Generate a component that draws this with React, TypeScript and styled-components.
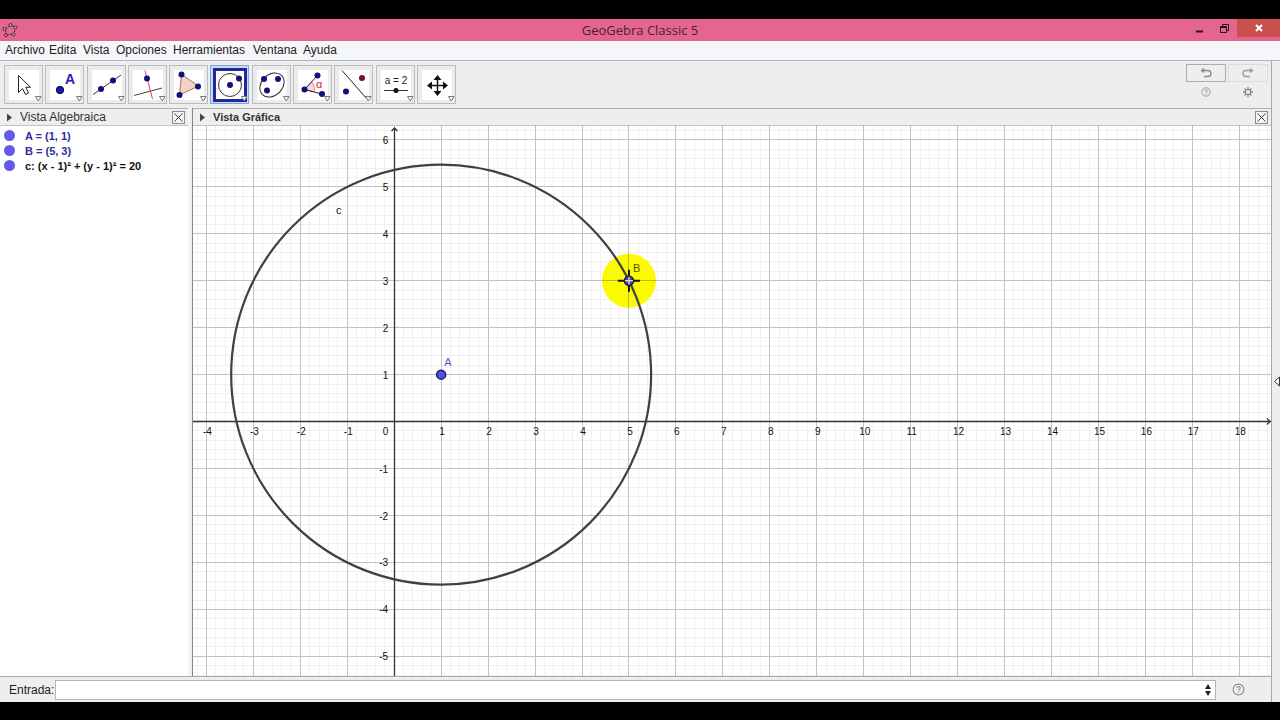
import React from "react";
import styled, { createGlobalStyle } from "styled-components";

const Global = createGlobalStyle`
  * { box-sizing: border-box; }
  body { margin: 0; background: #000; }
  button, input { font: inherit; }
`;

const Screen = styled.div`
  min-height: 100vh;
  display: flex;
  flex-direction: column;
  padding: 19px 0 18px;
  background: #000;
  color: #222;
  font: 12px/16px "Liberation Sans", Arial, sans-serif;
`;

const TitleBar = styled.header`
  display: grid;
  grid-template-columns: 1fr auto 1fr;
  align-items: center;
  height: 22px;
  background: #e4668f;
  color: #4a1f30;
`;

const AppIcon = styled.svg`
  width: 16px;
  height: 16px;
  margin-left: 2px;
`;

const Title = styled.h1`
  margin: 0;
  font: 13px/18px "Open Sans", sans-serif;
`;

const WindowButtons = styled.div`
  display: flex;
  justify-content: flex-end;
  align-self: start;
`;

const WindowButton = styled.button<{ $close?: boolean }>`
  display: grid;
  place-items: center;
  width: ${(p) => (p.$close ? 43 : 25)}px;
  height: 18px;
  padding: 0;
  border: 0;
  background: ${(p) => (p.$close ? "#c8504f" : "transparent")};
`;

const MenuBar = styled.nav`
  display: grid;
  grid-template-columns: 44px 34px 33px 57px 80px 50px auto;
  justify-content: start;
  align-items: center;
  height: 20px;
  padding: 0 0 1px 5px;
  background: #f5f6fa;
  border-bottom: 1px solid #b4b4b8;
`;

const MenuLink = styled.a`
  color: #222;
  text-decoration: none;
`;

const Workspace = styled.div`
  flex: 1;
  display: grid;
  grid-template-columns: minmax(0, 1fr) 8px;
  background: #eee;
`;

const Main = styled.div`
  display: flex;
  flex-direction: column;
  border-right: 1px solid #a8a8a8;
`;

const SideHandle = styled.button`
  display: grid;
  place-items: center;
  padding: 0;
  border: 0;
  background: #eee;
`;

const ToolBar = styled.div`
  display: flex;
  justify-content: space-between;
  align-items: center;
  height: 47px;
  padding: 0 3px 0 4px;
  background: #eee;
`;

const Tools = styled.div`
  display: flex;
  justify-content: space-between;
  width: 452px;
`;

const ToolButton = styled.button<{ $active?: boolean }>`
  display: block;
  width: 39px;
  height: 39px;
  padding: 0;
  border: 1px solid ${(p) => (p.$active ? "#7fa6dc" : "#bcbcbc")};
  background: ${(p) => (p.$active ? "#c9dcf5" : "#ebebeb")};

  svg { display: block; width: 37px; height: 37px; }
`;

const History = styled.div`
  align-self: start;
  display: grid;
  grid-template-columns: 40px 40px;
  gap: 1px 2px;
  justify-items: center;
  padding-top: 3px;
`;

const HistoryButton = styled.button<{ $raised?: boolean }>`
  display: grid;
  place-items: center;
  width: 40px;
  height: 18px;
  padding: 0;
  border: 1px solid ${(p) => (p.$raised ? "#ababab" : "#dcdcdc")};
  background: #eee;
`;

const IconButton = styled.button`
  display: grid;
  place-items: center;
  width: 18px;
  height: 18px;
  padding: 0;
  border: 0;
  background: transparent;
`;

const Views = styled.div`
  flex: 1;
  display: grid;
  grid-template-columns: 190px minmax(0, 1fr);
  gap: 2px;
  background: #eee;
`;

const View = styled.section<{ $divided?: boolean }>`
  display: flex;
  flex-direction: column;
  background: #fff;
  border-left: ${(p) => (p.$divided ? "1px solid #888" : "0")};
  border-right: ${(p) => (p.$divided ? "0" : "2px solid #f4f4f4")};
`;

const ViewHeader = styled.div`
  display: flex;
  align-items: center;
  height: 18px;
  padding: 0 3px 0 6px;
  background: #eee;
  border-top: 1px solid #b0b0b0;
  border-bottom: 1px solid #c4c4c4;
`;

const ViewTitle = styled.h2<{ $bold?: boolean }>`
  flex: 1;
  margin: 0 0 0 7px;
  font-size: ${(p) => (p.$bold ? 11 : 12)}px;
  line-height: 16px;
  font-weight: ${(p) => (p.$bold ? 700 : 400)};
  color: #333;
`;

const CloseButton = styled.button`
  display: grid;
  place-items: center;
  width: 13px;
  height: 13px;
  padding: 0;
  border: 1px solid #8c8c8c;
  background: #f2f2f2;
`;

const ObjectList = styled.ul`
  margin: 0;
  padding: 2px 0 0 4px;
  list-style: none;
`;

const ObjectRow = styled.li<{ $color: string }>`
  display: flex;
  align-items: center;
  gap: 10px;
  height: 15px;
  font-size: 11px;
  font-weight: 700;
  color: ${(p) => p.$color};
`;

const Marble = styled.span`
  width: 11px;
  height: 11px;
  border-radius: 50%;
  background: #6459ee;
`;

const Canvas = styled.div`
  flex: 1;
  display: flex;
  min-height: 300px;
`;

const Plot = styled.svg`
  flex: 1;
  min-width: 0;
  height: auto;
  font: 10px "Liberation Sans", Arial, sans-serif;
  fill: #111;
`;

const InputBar = styled.form`
  display: flex;
  align-items: center;
  height: 26px;
  padding: 0 24px 0 9px;
  border-top: 1px solid #a8a8a8;
`;

const InputLabel = styled.label`
  width: 46px;
`;

const InputBox = styled.div`
  flex: 1;
  display: flex;
  align-items: center;
  height: 20px;
  margin-right: 13px;
  padding-right: 3px;
  border: 1px solid #b4b4b4;
  background: #fff;
`;

const CommandInput = styled.input`
  flex: 1;
  min-width: 0;
  height: 18px;
  padding: 0 4px;
  border: 0;
  outline: 0;
  background: transparent;
`;

const NAVY = "#10107a";

function Dot({ x, y, r = 3, fill = NAVY }: { x: number; y: number; r?: number; fill?: string }) {
  return <circle cx={x} cy={y} r={r} fill={fill} />;
}

const tools: { name: string; art: React.ReactNode }[] = [
  {
    name: "Elige y Mueve",
    art: <path d="M13.500 9.500V26.500L17.500 22.500L20.500 28.500L23.500 27L20.800 21.300H25.500Z" fill="#fff" stroke="#222" />,
  },
  {
    name: "Punto",
    art: (
      <>
        <circle cx="14" cy="24" r="3.700" fill="#1414d0" stroke="#111" />
        <text x="19" y="18" fontSize="14" fontWeight="700" fill="#2020b8">A</text>
      </>
    ),
  },
  {
    name: "Recta",
    art: (
      <>
        <path d="M5 28.500L33 9" stroke="#333" />
        <Dot x={13} y={23} />
        <Dot x={25} y={14.500} />
      </>
    ),
  },
  {
    name: "Perpendicular",
    art: (
      <>
        <path d="M5 29.500L33 22" stroke="#444" />
        <path d="M16 4.500L23.500 33" stroke="#e0405a" />
        <Dot x={18} y={12.500} />
      </>
    ),
  },
  {
    name: "Polígono",
    art: (
      <>
        <path d="M11.500 8.500L28.500 20L9.500 29Z" fill="#f0d4c8" stroke="#b0714f" />
        <Dot x={11.500} y={8.500} />
        <Dot x={28} y={20.500} />
        <Dot x={9.500} y={29} />
      </>
    ),
  },
  {
    name: "Circunferencia",
    art: (
      <>
        <circle cx="19" cy="19" r="11.500" fill="none" stroke="#333" />
        <Dot x={19} y={19} />
        <Dot x={28} y={12.500} />
      </>
    ),
  },
  {
    name: "Elipse",
    art: (
      <>
        <ellipse cx="19" cy="19" rx="13.500" ry="10.500" fill="none" stroke="#333" transform="rotate(-45 19 19)" />
        <Dot x={11} y={13} />
        <Dot x={25} y={13} />
        <Dot x={14} y={24.500} />
      </>
    ),
  },
  {
    name: "Ángulo",
    art: (
      <>
        <path d="M10.500 23.500L17.500 16A10 10 0 0 1 20 26Z" fill="#fbd6d8" stroke="#e8808a" />
        <path d="M23.500 9.500L10.500 23.500L28 28" fill="none" stroke="#222" />
        <Dot x={23.500} y={9.500} />
        <Dot x={10.500} y={23.500} />
        <Dot x={28} y={28} />
        <text x="22" y="22" fontSize="11" fill="#e02838">α</text>
      </>
    ),
  },
  {
    name: "Simetría",
    art: (
      <>
        <path d="M7 4.500L32 33" stroke="#222" />
        <Dot x={11} y={25.500} />
        <Dot x={27} y={12} fill="#801020" />
      </>
    ),
  },
  {
    name: "Deslizador",
    art: (
      <>
        <text x="19" y="18" fontSize="10" textAnchor="middle" fill="#222">a = 2</text>
        <path d="M7 24.500H31" stroke="#333" />
        <Dot x={19} y={24.500} r={2.500} fill="#111" />
      </>
    ),
  },
  {
    name: "Desplaza Vista Gráfica",
    art: (
      <>
        <path d="M11 19.500H27M19.500 11V27" stroke="#111" strokeWidth="1.500" />
        <path d="M9 19.500L14 15.500V23.500ZM30 19.500L25 15.500V23.500ZM19.500 9L15.500 14H23.500ZM19.500 30L15.500 25H23.500Z" fill="#111" />
      </>
    ),
  },
];

function ToolIcon({ active, children }: { active: boolean; children: React.ReactNode }) {
  return (
    <svg viewBox="0 0 37 37" fill="none" aria-hidden="true">
      {active ? (
        <rect x="3.500" y="3.500" width="31" height="31" fill="#fff" stroke="#20289c" strokeWidth="3" />
      ) : (
        <rect x="4" y="4" width="30" height="30" fill="#fff" />
      )}
      {children}
      <path d="M30.500 30.500H36L33.250 35Z" fill="#fff" stroke="#777" />
    </svg>
  );
}

const menus = ["Archivo", "Edita", "Vista", "Opciones", "Herramientas", "Ventana", "Ayuda"];

const objects = [
  { text: "A = (1, 1)", color: "#2c2c9c" },
  { text: "B = (5, 3)", color: "#2c2c9c" },
  { text: "c: (x - 1)² + (y - 1)² = 20", color: "#111" },
];

const UNIT = 46.95;
const ORIGIN = { x: 201.2, y: 295.6 };
const px = (x: number) => ORIGIN.x + x * UNIT;
const py = (y: number) => ORIGIN.y - y * UNIT;
const range = (from: number, to: number) => Array.from({ length: to - from + 1 }, (_, i) => from + i);
const snap = (v: number) => Math.floor(v) + 0.5;

function Graph() {
  const columns = range(-4, 18);
  const rows = range(-5, 6);
  return (
    <Plot role="img" aria-label="Vista Gráfica">
      <g stroke="#f0f0f0">
        {range(-21, 250).filter((i) => i % 5).map((i) => (
          <line key={`c${i}`} x1={snap(px(i / 5))} x2={snap(px(i / 5))} y1="0" y2="100%" />
        ))}
        {range(-150, 31).filter((i) => i % 5).map((i) => (
          <line key={`r${i}`} y1={snap(py(i / 5))} y2={snap(py(i / 5))} x1="0" x2="100%" />
        ))}
      </g>
      <g stroke="#c2c2c2">
        {range(-4, 50).map((n) => (
          <line key={`c${n}`} x1={snap(px(n))} x2={snap(px(n))} y1="0" y2="100%" />
        ))}
        {range(-30, 6).map((n) => (
          <line key={`r${n}`} y1={snap(py(n))} y2={snap(py(n))} x1="0" x2="100%" />
        ))}
      </g>
      <g stroke="#333" strokeWidth="1.300" fill="none">
        <line x1="0" x2="100%" y1={snap(ORIGIN.y)} y2={snap(ORIGIN.y)} />
        <line x1={snap(ORIGIN.x)} x2={snap(ORIGIN.x)} y1="2" y2="100%" />
        <path d={`M${snap(ORIGIN.x) - 3} 5L${snap(ORIGIN.x)} 2L${snap(ORIGIN.x) + 3} 5`} />
        <svg x="100%" y={snap(ORIGIN.y)} overflow="visible">
          <path d="M-4 -3L-1 0L-4 3" />
        </svg>
      </g>
      <g textAnchor="middle">
        {columns.filter((n) => n !== 0).map((n) => (
          <text key={n} x={px(n) + 1} y={ORIGIN.y + 13}>{n}</text>
        ))}
      </g>
      <g textAnchor="end">
        {rows.filter((n) => n !== 0).map((n) => (
          <text key={n} x={ORIGIN.x - 6} y={py(n) + 4}>{n}</text>
        ))}
        <text x={ORIGIN.x - 6} y={ORIGIN.y + 13}>0</text>
      </g>
      <circle cx={px(5)} cy={py(3)} r="27" fill="#fcfa00" />
      <path d={`M${px(5) - 27} ${snap(py(3))}h54M${snap(px(5))} ${py(3) - 27}v54`} stroke="#b9b52a" />
      <circle cx={px(1)} cy={py(1)} r={Math.sqrt(20) * UNIT} fill="none" stroke="#404040" strokeWidth="2.200" />
      <circle cx={px(5)} cy={py(3)} r="4.500" fill="#4a48c8" stroke="#15153a" strokeWidth="1.500" />
      <path d={`M${px(5) - 11} ${py(3)}h22M${px(5)} ${py(3) - 11}v22`} stroke="#111" strokeWidth="2" />
      <path d={`M${px(5) - 4} ${py(3)}h8M${px(5)} ${py(3) - 4}v8`} stroke="#ddd" strokeWidth="1.500" />
      <circle cx={px(1)} cy={py(1)} r="4.500" fill="#4d4dff" stroke="#1c1c50" strokeWidth="1.500" />
      <text x={px(1) + 3} y={py(1) - 9} fontSize="11" fill="#5c54c8">A</text>
      <text x={px(5) + 4} y={py(3) - 9} fontSize="11" fill="#55501c">B</text>
      <text x="143" y="88" fontSize="11">c</text>
    </Plot>
  );
}

function Disclosure() {
  return (
    <svg width="7" height="9" aria-hidden="true">
      <path d="M1 0.500L6 4.500L1 8.500Z" fill="#444" />
    </svg>
  );
}

function CloseView({ label }: { label: string }) {
  return (
    <CloseButton type="button" aria-label={label}>
      <svg width="11" height="11" stroke="#444" aria-hidden="true">
        <path d="M1.500 1.500L9.500 9.500M9.500 1.500L1.500 9.500" />
      </svg>
    </CloseButton>
  );
}

function HelpIcon({ size }: { size: number }) {
  return (
    <svg width={size} height={size} viewBox="0 0 12 12" fill="none" stroke="#8a8a8a" aria-hidden="true">
      <circle cx="6" cy="6" r="5" />
      <path d="M4.500 4.700C4.500 2.800 7.600 2.800 7.600 4.700C7.600 5.800 6 5.900 6 7.200M6 8V9.200" />
    </svg>
  );
}

export default function App() {
  return (
    <Screen>
      <Global />
      <TitleBar>
        <AppIcon viewBox="0 0 16 16" fill="none" stroke="#3c2838" aria-hidden="true">
          <path d="M3 7L9 3L13.500 5.500L12 12L4.500 13Z" strokeDasharray="2 1" />
          <g fill="#d8a0c0">
            <circle cx="2.500" cy="7" r="1.500" />
            <circle cx="8.500" cy="3" r="1.500" />
            <circle cx="13.500" cy="5.500" r="1.500" />
            <circle cx="11.500" cy="12.500" r="1.500" />
            <circle cx="4" cy="13" r="1.500" />
          </g>
        </AppIcon>
        <Title>GeoGebra Classic 5</Title>
        <WindowButtons>
          <WindowButton type="button" aria-label="Minimizar">
            <svg width="9" height="10"><path d="M1 8.500H8" stroke="#2a1018" strokeWidth="2" /></svg>
          </WindowButton>
          <WindowButton type="button" aria-label="Restaurar">
            <svg width="11" height="11" fill="none" stroke="#2a1018">
              <path d="M1.500 3.500H7.500V9.500H1.500ZM1.500 4.500H7.500M3.500 3V1.500H9.500V7.500H8" />
            </svg>
          </WindowButton>
          <WindowButton type="button" $close aria-label="Cerrar">
            <svg width="8" height="8" stroke="#fff" strokeWidth="2"><path d="M1 1L7 7M7 1L1 7" /></svg>
          </WindowButton>
        </WindowButtons>
      </TitleBar>
      <MenuBar>
        {menus.map((m) => (
          <MenuLink key={m} href="#">{m}</MenuLink>
        ))}
      </MenuBar>
      <Workspace>
        <Main>
          <ToolBar>
            <Tools>
              {tools.map((t, i) => (
                <ToolButton key={t.name} type="button" aria-label={t.name} $active={i === 5}>
                  <ToolIcon active={i === 5}>{t.art}</ToolIcon>
                </ToolButton>
              ))}
            </Tools>
            <History>
              <HistoryButton type="button" $raised aria-label="Deshace">
                <svg width="12" height="10" fill="none" stroke="#8a8a8a" strokeWidth="1.300">
                  <path d="M4 0.500L1.500 2.500L4 4.500M1.500 2.500H8A3 3 0 0 1 8 8.500H4" />
                </svg>
              </HistoryButton>
              <HistoryButton type="button" aria-label="Rehace">
                <svg width="12" height="10" fill="none" stroke="#9a9a9a" strokeWidth="1.300">
                  <path d="M8 0.500L10.500 2.500L8 4.500M10.500 2.500H4A3 3 0 0 0 4 8.500H8" />
                </svg>
              </HistoryButton>
              <IconButton type="button" aria-label="Ayuda"><HelpIcon size={10} /></IconButton>
              <IconButton type="button" aria-label="Preferencias">
                <svg width="10" height="10" fill="none" stroke="#8a8a8a">
                  <circle cx="5" cy="5" r="2.700" strokeWidth="1.300" />
                  <path d="M5 0V2M5 8V10M0 5H2M8 5H10M1.500 1.500L3 3M7 7L8.500 8.500M8.500 1.500L7 3M3 7L1.500 8.500" strokeWidth="1.300" />
                </svg>
              </IconButton>
            </History>
          </ToolBar>
          <Views>
            <View>
              <ViewHeader>
                <Disclosure />
                <ViewTitle>Vista Algebraica</ViewTitle>
                <CloseView label="Cerrar Vista Algebraica" />
              </ViewHeader>
              <ObjectList>
                {objects.map((o) => (
                  <ObjectRow key={o.text} $color={o.color}>
                    <Marble />
                    {o.text}
                  </ObjectRow>
                ))}
              </ObjectList>
            </View>
            <View $divided>
              <ViewHeader>
                <Disclosure />
                <ViewTitle $bold>Vista Gráfica</ViewTitle>
                <CloseView label="Cerrar Vista Gráfica" />
              </ViewHeader>
              <Canvas>
                <Graph />
              </Canvas>
            </View>
          </Views>
          <InputBar>
            <InputLabel htmlFor="command">Entrada:</InputLabel>
            <InputBox>
              <CommandInput id="command" />
              <svg width="8" height="12" fill="#222" aria-hidden="true">
                <path d="M4 0L7 5H1ZM4 12L7 7H1Z" />
              </svg>
            </InputBox>
            <IconButton type="button" aria-label="Ayuda de Entrada"><HelpIcon size={13} /></IconButton>
          </InputBar>
        </Main>
        <SideHandle type="button" aria-label="Mostrar panel">
          <svg width="8" height="11" fill="#fff" stroke="#333" aria-hidden="true">
            <path d="M7.500 1L2.500 5.500L7.500 10Z" />
          </svg>
        </SideHandle>
      </Workspace>
    </Screen>
  );
}
